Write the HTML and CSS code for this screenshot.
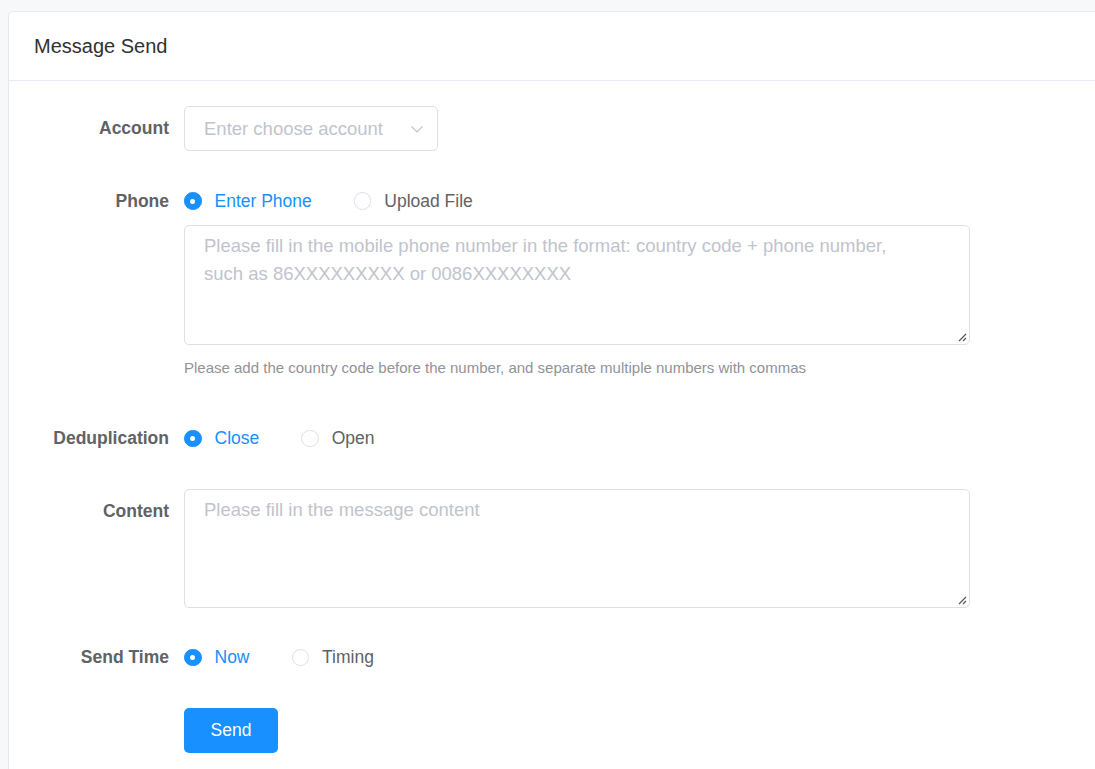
FILE: index.html
```html
<!DOCTYPE html>
<html>
<head>
<meta charset="utf-8">
<link rel="stylesheet" href="styles.css">
</head>
<body>
<div class="card">
  <div class="card-header">Message Send</div>
  <div class="card-body">
    <div class="form-item">
      <div class="label">Account</div>
      <div class="content">
        <div class="select">
          <span class="placeholder">Enter choose account</span>
          <svg class="chevron" width="14" height="14" viewBox="0 0 14 14"><path d="M1.5 4.5 L7 10 L12.5 4.5" fill="none" stroke="#c0c4cc" stroke-width="1.2"/></svg>
        </div>
      </div>
    </div>
    <div class="form-item">
      <div class="label">Phone</div>
      <div class="content">
        <div class="radio-group">
          <span class="radio checked"><span class="dot"></span><span class="rtext">Enter Phone</span></span>
          <span class="radio"><span class="dot"></span><span class="rtext">Upload File</span></span>
        </div>
        <div class="textarea tall1">
          <span class="placeholder">Please fill in the mobile phone number in the format: country code + phone number, such as 86XXXXXXXXX or 0086XXXXXXXX</span>
          <svg class="grip" width="10" height="10" viewBox="0 0 10 10"><path d="M9 2 L2 9 M9 6 L6 9" stroke="#555" stroke-width="1.2"/></svg>
        </div>
        <div class="help">Please add the country code before the number, and separate multiple numbers with commas</div>
      </div>
    </div>
    <div class="form-item">
      <div class="label">Deduplication</div>
      <div class="content">
        <div class="radio-group">
          <span class="radio checked"><span class="dot"></span><span class="rtext">Close</span></span>
          <span class="radio"><span class="dot"></span><span class="rtext">Open</span></span>
        </div>
      </div>
    </div>
    <div class="form-item">
      <div class="label">Content</div>
      <div class="content">
        <div class="textarea tall2">
          <span class="placeholder">Please fill in the message content</span>
          <svg class="grip" width="10" height="10" viewBox="0 0 10 10"><path d="M9 2 L2 9 M9 6 L6 9" stroke="#555" stroke-width="1.2"/></svg>
        </div>
      </div>
    </div>
    <div class="form-item">
      <div class="label">Send Time</div>
      <div class="content">
        <div class="radio-group">
          <span class="radio checked"><span class="dot"></span><span class="rtext">Now</span></span>
          <span class="radio"><span class="dot"></span><span class="rtext">Timing</span></span>
        </div>
      </div>
    </div>
    <div class="form-item">
      <div class="label"></div>
      <div class="content">
        <button class="btn">Send</button>
      </div>
    </div>
  </div>
</div>
</body>
</html>
```
FILE: styles.css
```css
html, body {
  margin: 0;
  padding: 0;
  background: #f7f8fa;
  font-family: "Liberation Sans", Arial, sans-serif;
}
body {
  padding: 11px 0 0 8px;
  overflow: hidden;
  height: 769px;
  box-sizing: border-box;
}
.card {
  width: 1120px;
  background: #fff;
  border: 1px solid #e6e9f0;
  border-radius: 5px;
  box-sizing: border-box;
  height: 800px;
}
.card-header {
  height: 69px;
  box-sizing: border-box;
  padding: 0 25px;
  display: flex;
  align-items: center;
  font-size: 20px;
  color: #303133;
  border-bottom: 1px solid #e6ebf5;
}
.card-body {
  padding: 25px 25px;
}
.form-item {
  display: flex;
  margin-bottom: 27.5px;
}
.label {
  width: 150px;
  flex: none;
  box-sizing: border-box;
  padding-right: 15px;
  text-align: right;
  font-size: 17.5px;
  font-weight: bold;
  color: #606266;
  line-height: 45px;
}
.content {
  flex: none;
  width: 786px;
}
.select {
  width: 254px;
  height: 45px;
  box-sizing: border-box;
  border: 1px solid #dcdfe6;
  border-radius: 5px;
  display: flex;
  align-items: center;
  justify-content: space-between;
  padding: 0 13px 0 19px;
}
.placeholder {
  color: #c0c4cc;
  font-size: 18.5px;
}
.chevron {
  display: block;
}
.radio-group {
  display: flex;
  align-items: center;
  height: 45px;
  gap: 42px;
}
.radio {
  display: flex;
  align-items: center;
  font-size: 17.5px;
  color: #606266;
}
.dot {
  width: 17.5px;
  height: 17.5px;
  box-sizing: border-box;
  border: 1px solid #dcdfe6;
  border-radius: 50%;
  margin-right: 13px;
  display: flex;
  align-items: center;
  justify-content: center;
  background: #fff;
}
.radio.checked {
  color: #1890ff;
}
.radio.checked .dot {
  background: #1890ff;
  border-color: #1890ff;
}
.radio.checked .dot::after {
  content: "";
  width: 5px;
  height: 5px;
  border-radius: 50%;
  background: #fff;
}
.textarea {
  position: relative;
  box-sizing: border-box;
  border: 1px solid #dcdfe6;
  border-radius: 5px;
  padding: 6px 19px;
  line-height: 27px;
  margin-top: 1px;
}
.tall1 {
  height: 120px;
  padding-right: 64px;
}
.tall2 {
  height: 119px;
  margin-top: 0;
}
.grip {
  position: absolute;
  right: 2px;
  bottom: 2px;
}
.help {
  font-size: 15px;
  color: #909399;
  line-height: 20px;
  padding-top: 13px;
  margin-bottom: 11px;
}
.btn {
  width: 94px;
  height: 45px;
  border: none;
  border-radius: 5px;
  background: #1890ff;
  color: #fff;
  font-family: "Liberation Sans", Arial, sans-serif;
  font-size: 17.5px;
  padding: 0;
}
```
